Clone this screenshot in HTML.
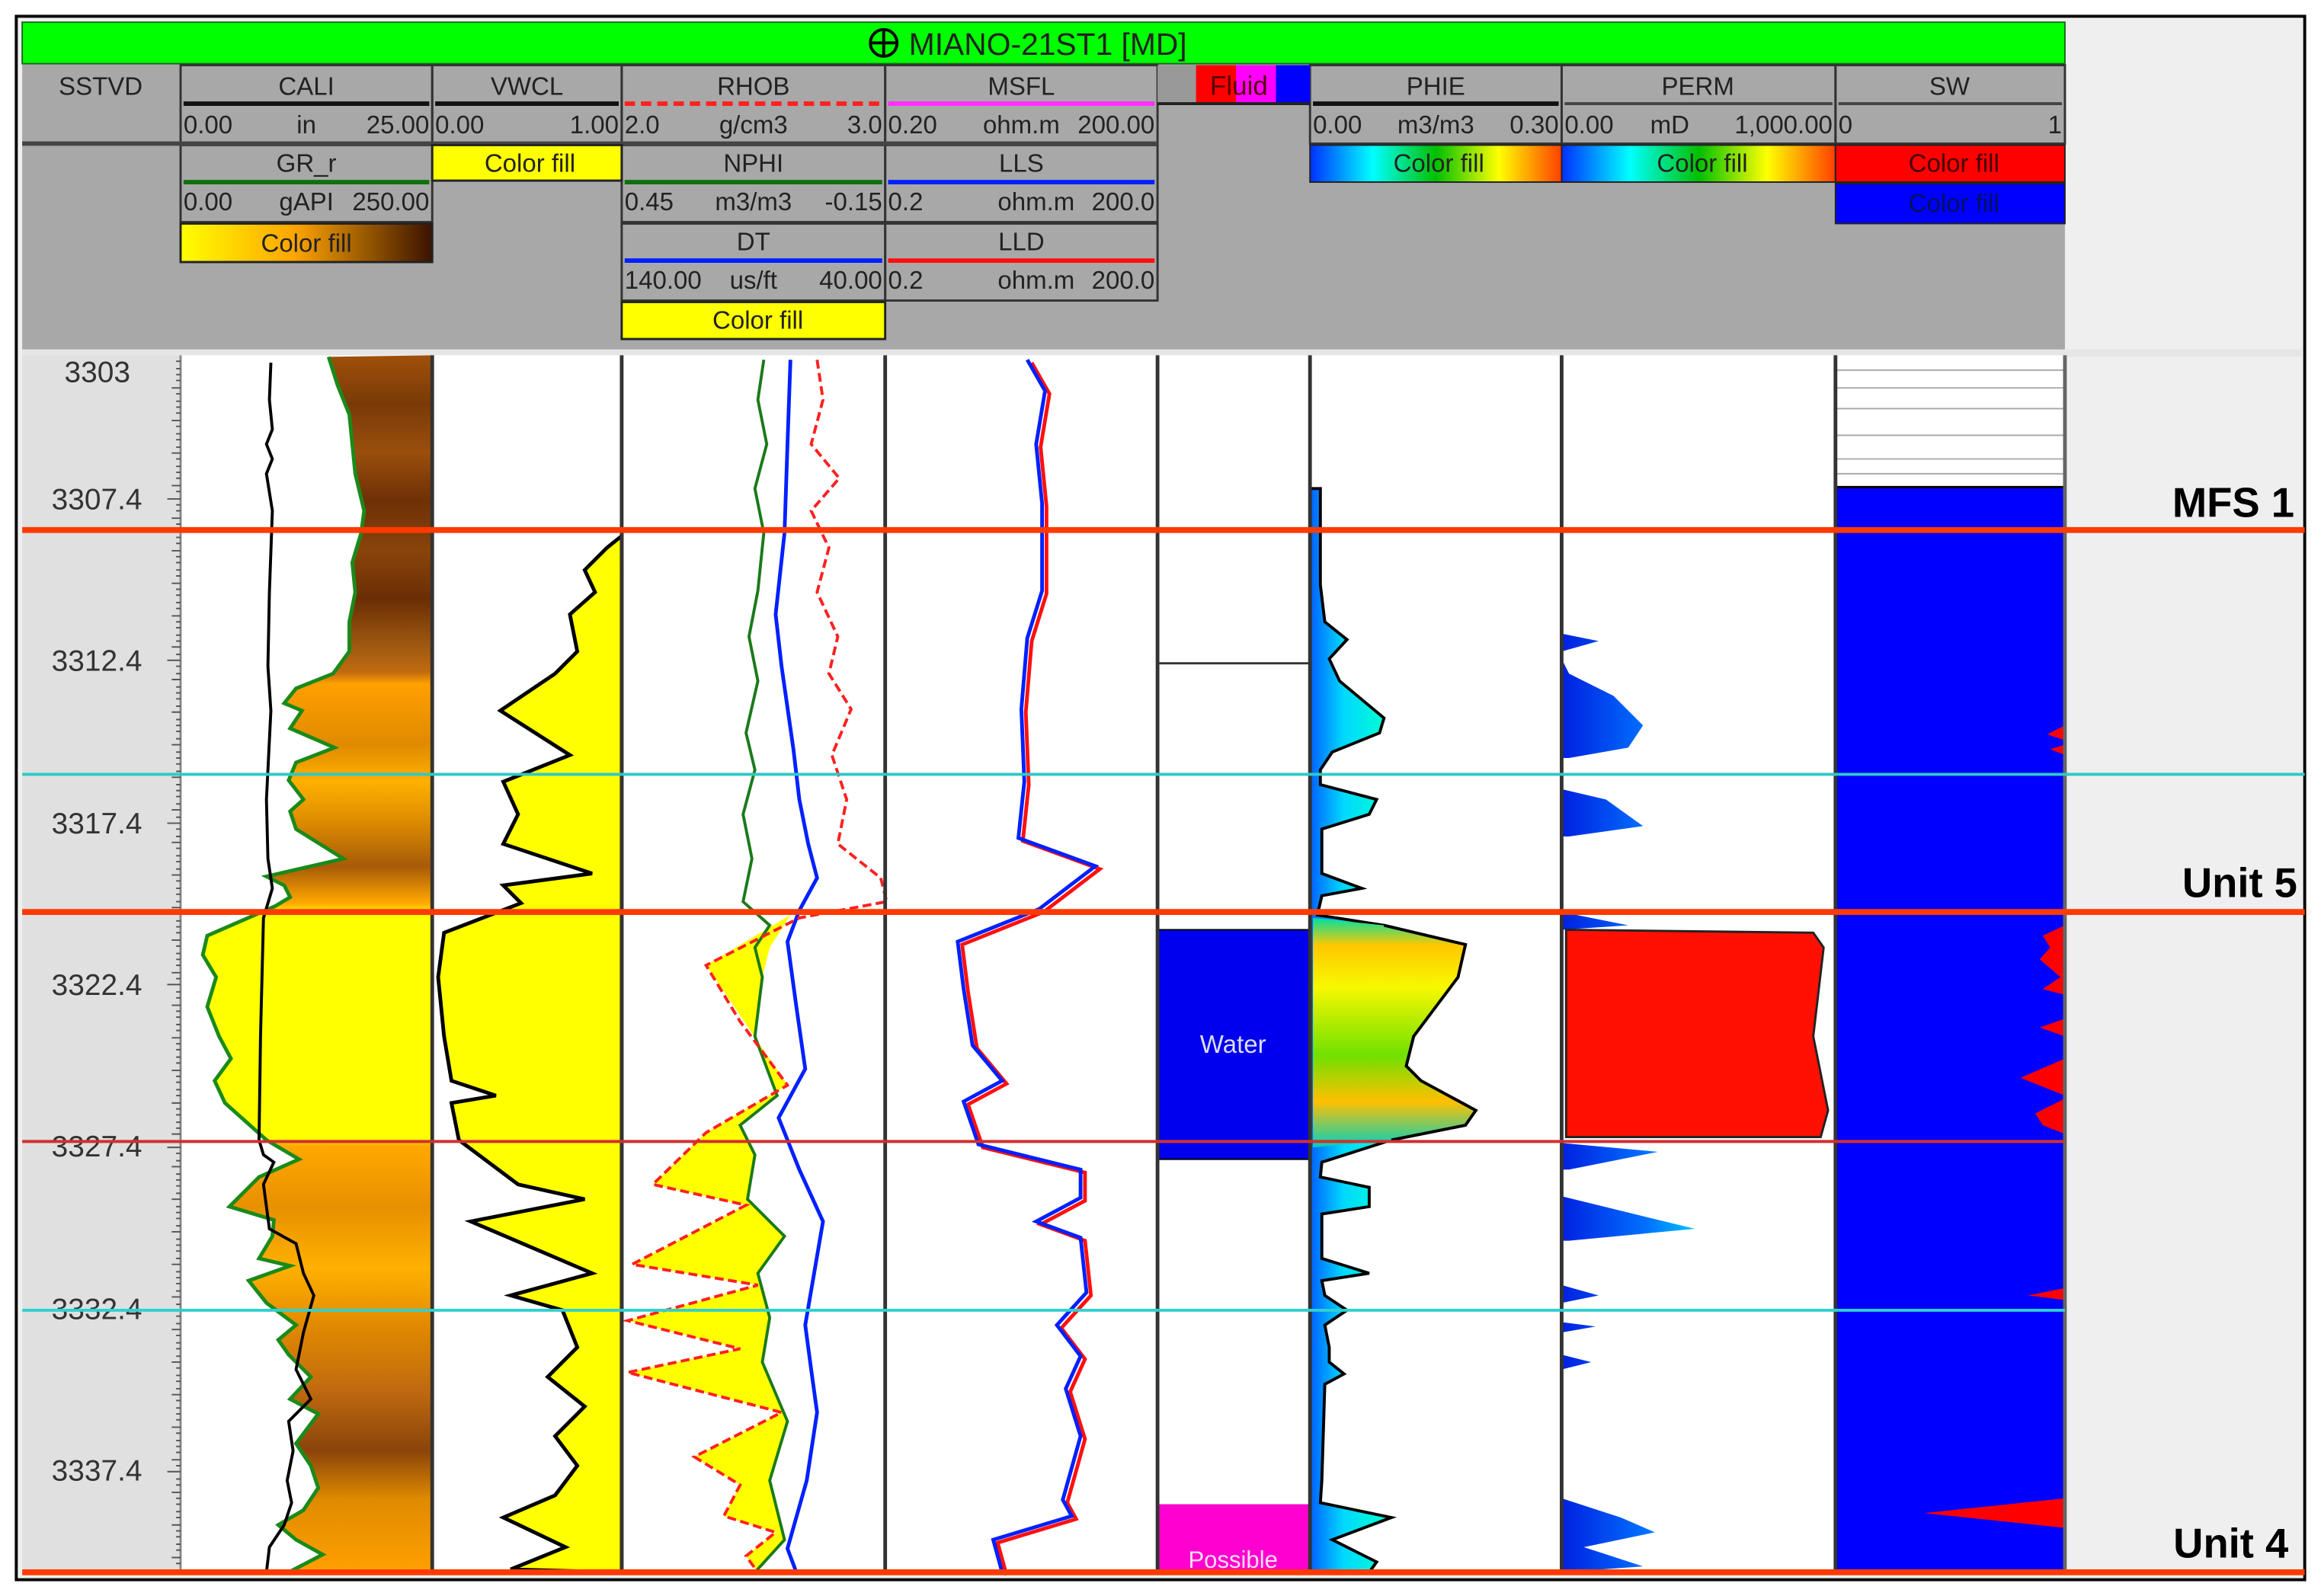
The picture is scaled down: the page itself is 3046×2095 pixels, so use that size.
<!DOCTYPE html>
<html><head><meta charset="utf-8"><style>
html,body{margin:0;padding:0;background:#fff;}
svg{display:block;}
text{font-family:"Liberation Sans",sans-serif;}
</style></head><body>
<svg width="3046" height="2095" viewBox="0 0 1568 1078" preserveAspectRatio="none" xmlns="http://www.w3.org/2000/svg">
<defs>
<linearGradient id="grf" x1="0" x2="1" y1="0" y2="0"><stop offset="0" stop-color="#ffff00"/><stop offset="0.45" stop-color="#ffa500"/><stop offset="1" stop-color="#3a1200"/></linearGradient>
<linearGradient id="rb" x1="0" x2="1" y1="0" y2="0"><stop offset="0" stop-color="#0030ff"/><stop offset="0.25" stop-color="#00ffff"/><stop offset="0.5" stop-color="#00c000"/><stop offset="0.75" stop-color="#ffff00"/><stop offset="1" stop-color="#ff4000"/></linearGradient>
<linearGradient id="grv" x1="0" x2="0" y1="240" y2="1062" gradientUnits="userSpaceOnUse">
<stop offset="0" stop-color="#a0500a"/><stop offset="0.04" stop-color="#7a3a08"/><stop offset="0.08" stop-color="#9a4e0c"/><stop offset="0.12" stop-color="#6e3006"/><stop offset="0.16" stop-color="#8a440a"/><stop offset="0.2" stop-color="#6a2e05"/><stop offset="0.24" stop-color="#a05a10"/><stop offset="0.26" stop-color="#c06a10"/>
<stop offset="0.27" stop-color="#ffa000"/><stop offset="0.32" stop-color="#e08a00"/><stop offset="0.35" stop-color="#ffb000"/><stop offset="0.38" stop-color="#e09000"/><stop offset="0.42" stop-color="#a85a08"/><stop offset="0.45" stop-color="#ffa800"/>
<stop offset="0.46" stop-color="#ffff00"/><stop offset="0.64" stop-color="#ffee00"/><stop offset="0.65" stop-color="#ffa800"/><stop offset="0.7" stop-color="#e89000"/><stop offset="0.75" stop-color="#ffb000"/><stop offset="0.8" stop-color="#e08800"/><stop offset="0.85" stop-color="#c06a10"/><stop offset="0.9" stop-color="#8a440a"/><stop offset="0.94" stop-color="#e08a00"/><stop offset="1" stop-color="#ffa000"/></linearGradient>
<linearGradient id="phv" x1="0" x2="0" y1="620" y2="775" gradientUnits="userSpaceOnUse"><stop offset="0" stop-color="#00e0a0"/><stop offset="0.12" stop-color="#ffc800"/><stop offset="0.3" stop-color="#f8f800"/><stop offset="0.6" stop-color="#70e000"/><stop offset="0.8" stop-color="#ffc000"/><stop offset="1" stop-color="#00d0c0"/></linearGradient>
<linearGradient id="cy" x1="885" x2="960" y1="0" y2="0" gradientUnits="userSpaceOnUse"><stop offset="0" stop-color="#0060ff"/><stop offset="0.3" stop-color="#00d8ff"/><stop offset="0.7" stop-color="#00ffd0"/><stop offset="1" stop-color="#40ff80"/></linearGradient>
<linearGradient id="bl" x1="1055" x2="1150" y1="0" y2="0" gradientUnits="userSpaceOnUse"><stop offset="0" stop-color="#0020e0"/><stop offset="0.6" stop-color="#0070ff"/><stop offset="1" stop-color="#00d0ff"/></linearGradient>
</defs>

<rect x="0" y="0" width="1568" height="1078" fill="#fff"/>
<rect x="11" y="11" width="1546" height="1056" fill="#efefef" stroke="#000" stroke-width="2"/>
<rect x="15" y="15" width="1380" height="222" fill="#a8a8a8"/>
<rect x="15" y="236" width="1540" height="5" fill="#e6e6e6"/>
<rect x="15" y="240" width="1380" height="822" fill="#fff"/>
<rect x="15" y="240" width="107" height="822" fill="#e0e0e0"/>

<rect x="15" y="15" width="1380" height="28" fill="#00ff00" stroke="#1a6a1a" stroke-width="1"/>
<circle cx="597" cy="29" r="9" fill="none" stroke="#000" stroke-width="2"/><line x1="588" y1="29" x2="606" y2="29" stroke="#000" stroke-width="2"/><line x1="597" y1="20" x2="597" y2="38" stroke="#000" stroke-width="2"/>
<text x="614" y="37" font-size="21" fill="#222">MIANO-21ST1 [MD]</text>

<g stroke="#333" stroke-width="1.5" fill="none">
<rect x="122" y="44" width="170" height="53"/><rect x="122" y="98" width="170" height="52"/>
<rect x="292" y="44" width="128" height="53"/>
<rect x="420" y="44" width="178" height="53"/><rect x="420" y="98" width="178" height="52"/><rect x="420" y="151" width="178" height="52"/>
<rect x="598" y="44" width="184" height="53"/><rect x="598" y="98" width="184" height="52"/><rect x="598" y="151" width="184" height="52"/>
<rect x="885" y="44" width="170" height="53"/><rect x="1055" y="44" width="185" height="53"/><rect x="1240" y="44" width="155" height="53"/>
</g>
<line x1="15" y1="97" x2="782" y2="97" stroke="#444" stroke-width="3"/>
<rect x="122" y="151" width="170" height="26" fill="url(#grf)" stroke="#222" stroke-width="1.5"/>
<rect x="292" y="98" width="128" height="24" fill="#ffff00" stroke="#222" stroke-width="1.5"/>
<rect x="420" y="204" width="178" height="25" fill="#ffff00" stroke="#222" stroke-width="1.5"/>
<rect x="885" y="98" width="170" height="25" fill="url(#rb)" stroke="#222" stroke-width="1"/>
<rect x="1055" y="98" width="185" height="25" fill="url(#rb)" stroke="#222" stroke-width="1"/>
<rect x="1240" y="98" width="155" height="25" fill="#ff0000" stroke="#222" stroke-width="1"/>
<rect x="1240" y="124" width="155" height="27" fill="#0000ff" stroke="#222" stroke-width="1"/>
<rect x="782" y="44" width="103" height="26" fill="#999"/>
<rect x="808" y="44" width="27" height="26" fill="#ff0000"/><rect x="835" y="44" width="27" height="26" fill="#ff00ff"/><rect x="862" y="44" width="23" height="26" fill="#0000ff"/>
<line x1="782" y1="70" x2="885" y2="70" stroke="#222" stroke-width="2"/>

<g stroke-width="3">
<line x1="124" y1="70" x2="290" y2="70" stroke="#111"/>
<line x1="294" y1="70" x2="418" y2="70" stroke="#111"/>
<line x1="422" y1="70" x2="596" y2="70" stroke="#ff2020" stroke-dasharray="7,4"/>
<line x1="600" y1="70" x2="780" y2="70" stroke="#ff30ff"/>
<line x1="124" y1="123" x2="290" y2="123" stroke="#107010"/>
<line x1="422" y1="123" x2="596" y2="123" stroke="#107010"/>
<line x1="600" y1="123" x2="780" y2="123" stroke="#0020ff"/>
<line x1="422" y1="176" x2="596" y2="176" stroke="#0020ff"/>
<line x1="600" y1="176" x2="780" y2="176" stroke="#ff1010"/>
<line x1="887" y1="70" x2="1053" y2="70" stroke="#111"/>
<line x1="1057" y1="70" x2="1238" y2="70" stroke="#444" stroke-width="2"/>
<line x1="1242" y1="70" x2="1393" y2="70" stroke="#444" stroke-width="2"/>
</g>

<g font-size="17" fill="#222">
<text x="68" y="64" text-anchor="middle">SSTVD</text>
<text x="207" y="64" text-anchor="middle">CALI</text>
<text x="356" y="64" text-anchor="middle">VWCL</text>
<text x="509" y="64" text-anchor="middle">RHOB</text>
<text x="690" y="64" text-anchor="middle">MSFL</text>
<text x="837" y="64" text-anchor="middle" fill="#500" font-size="18">Fluid</text>
<text x="970" y="64" text-anchor="middle">PHIE</text>
<text x="1147" y="64" text-anchor="middle">PERM</text>
<text x="1317" y="64" text-anchor="middle">SW</text>
<text x="207" y="116" text-anchor="middle">GR_r</text>
<text x="509" y="116" text-anchor="middle">NPHI</text>
<text x="690" y="116" text-anchor="middle">LLS</text>
<text x="509" y="169" text-anchor="middle">DT</text>
<text x="690" y="169" text-anchor="middle">LLD</text>
<text x="124" y="90">0.00</text><text x="207" y="90" text-anchor="middle">in</text><text x="290" y="90" text-anchor="end">25.00</text>
<text x="294" y="90">0.00</text><text x="418" y="90" text-anchor="end">1.00</text>
<text x="422" y="90">2.0</text><text x="509" y="90" text-anchor="middle">g/cm3</text><text x="596" y="90" text-anchor="end">3.0</text>
<text x="600" y="90">0.20</text><text x="690" y="90" text-anchor="middle">ohm.m</text><text x="780" y="90" text-anchor="end">200.00</text>
<text x="887" y="90">0.00</text><text x="970" y="90" text-anchor="middle">m3/m3</text><text x="1053" y="90" text-anchor="end">0.30</text>
<text x="1057" y="90">0.00</text><text x="1128" y="90" text-anchor="middle">mD</text><text x="1238" y="90" text-anchor="end">1,000.00</text>
<text x="1242" y="90">0</text><text x="1393" y="90" text-anchor="end">1</text>
<text x="124" y="142">0.00</text><text x="207" y="142" text-anchor="middle">gAPI</text><text x="290" y="142" text-anchor="end">250.00</text>
<text x="422" y="142">0.45</text><text x="509" y="142" text-anchor="middle">m3/m3</text><text x="596" y="142" text-anchor="end">-0.15</text>
<text x="600" y="142">0.2</text><text x="700" y="142" text-anchor="middle">ohm.m</text><text x="780" y="142" text-anchor="end">200.0</text>
<text x="422" y="195">140.00</text><text x="509" y="195" text-anchor="middle">us/ft</text><text x="596" y="195" text-anchor="end">40.00</text>
<text x="600" y="195">0.2</text><text x="700" y="195" text-anchor="middle">ohm.m</text><text x="780" y="195" text-anchor="end">200.0</text>
<text x="207" y="170" text-anchor="middle">Color fill</text>
<text x="358" y="116" text-anchor="middle">Color fill</text>
<text x="512" y="222" text-anchor="middle">Color fill</text>
<text x="972" y="116" text-anchor="middle">Color fill</text>
<text x="1150" y="116" text-anchor="middle">Color fill</text>
<text x="1320" y="116" text-anchor="middle" fill="#400">Color fill</text>
<text x="1320" y="143" text-anchor="middle" fill="#001060">Color fill</text>
</g>

<polygon fill="url(#grv)" points="292,240 222,241 228,260 236,280 238,300 240,320 246,345 244,360 238,380 240,400 236,420 236,440 225,455 200,465 192,475 204,480 196,492 226,505 200,515 195,527 205,540 196,548 200,560 232,580 180,592 192,598 196,606 186,612 140,632 137,645 146,660 140,680 148,700 156,715 145,730 152,745 180,770 202,783 175,795 155,815 185,824 184,835 175,850 196,855 168,865 180,880 200,895 188,905 195,915 210,930 196,945 215,955 200,975 210,990 215,1005 205,1020 188,1030 200,1040 218,1050 195,1062 292,1062"/>
<polygon fill="#ffff00" points="292,616 186,616 140,632 137,645 146,660 140,680 148,700 156,715 145,730 152,745 180,770 292,770"/>
<polyline fill="none" stroke="#1a8a1a" stroke-width="2.5" points="222,241 228,260 236,280 238,300 240,320 246,345 244,360 238,380 240,400 236,420 236,440 225,455 200,465 192,475 204,480 196,492 226,505 200,515 195,527 205,540 196,548 200,560 232,580 180,592 192,598 196,606 186,612 140,632 137,645 146,660 140,680 148,700 156,715 145,730 152,745 180,770 202,783 175,795 155,815 185,824 184,835 175,850 196,855 168,865 180,880 200,895 188,905 195,915 210,930 196,945 215,955 200,975 210,990 215,1005 205,1020 188,1030 200,1040 218,1050 195,1062"/>
<polyline fill="none" stroke="#000" stroke-width="2" points="183,245 182,270 184,290 180,300 184,310 180,320 184,345 182,400 181,450 183,480 180,540 181,580 184,600 178,620 176,700 175,770 178,780 185,785 178,800 182,830 200,840 205,860 212,875 205,900 200,925 210,945 195,960 198,980 194,1000 197,1015 192,1030 182,1045 180,1062"/>

<polygon fill="#ffff00" stroke="#000" stroke-width="2.5" points="420,362 410,370 395,385 402,400 385,415 390,440 375,455 338,480 385,510 340,528 350,550 340,570 400,590 340,598 352,610 300,630 296,660 300,700 305,730 335,740 305,745 310,770 350,800 395,810 318,825 400,860 345,875 380,885 390,910 370,930 395,950 375,970 390,990 375,1010 340,1025 382,1045 345,1060 420,1062"/>

<polygon fill="#ffff00" points="534,618 477,652 532,733 477,765 441,800 504,814 427,854 512,868 424,892 500,911 424,927 528,954 469,984 500,1003 489,1024 524,1035 504,1051 512,1062 510,1062 530,1040 520,1000 532,960 515,920 520,890 512,860 530,835 505,810 510,780 500,760 525,740 510,700 515,660 520,640"/>
<polyline fill="none" stroke="#1a7a1a" stroke-width="2" points="516,243 512,270 518,300 510,330 516,360 512,399 506,430 512,460 504,495 510,520 502,550 508,580 502,609 520,625 510,640 515,660 510,700 525,740 500,760 510,780 505,810 530,835 512,860 520,890 515,920 532,960 520,1000 530,1040 510,1062"/>
<polyline fill="none" stroke="#0020ff" stroke-width="2.5" points="534,243 532,300 530,360 524,415 528,450 536,506 540,540 546,570 552,593 540,615 532,636 538,680 544,722 526,755 540,790 556,825 550,860 544,895 548,925 552,954 545,1000 532,1046 538,1062"/>
<polyline fill="none" stroke="#ff2020" stroke-width="2" stroke-dasharray="6,3" points="552,243 556,270 548,300 567,323 548,345 560,370 552,400 566,430 560,455 575,479 562,510 572,540 566,570 595,593 599,609 540,620 477,652 500,690 532,733 477,765 441,800 504,814 427,854 512,868 424,892 500,911 424,927 528,954 469,984 500,1003 489,1024 524,1035 504,1051 512,1062"/>

<polyline fill="none" stroke="#ff1010" stroke-width="2.5" transform="translate(3,2)" points="694,243 706,264 700,300 704,340 704,399 694,431 690,479 692,528 688,566 740,585 702,614 647,636 651,668 657,706 677,730 651,744 661,773 730,790 730,809 700,825 730,836 734,873 714,895 730,916 720,938 730,970 718,1013 724,1024 671,1040 677,1062"/>
<polyline fill="none" stroke="#0020ff" stroke-width="2.5" points="694,243 706,264 700,300 704,340 704,399 694,431 690,479 692,528 688,566 740,585 702,614 647,636 651,668 657,706 677,730 651,744 661,773 730,790 730,809 700,825 730,836 734,873 714,895 730,916 720,938 730,970 718,1013 724,1024 671,1040 677,1062"/>

<line x1="782" y1="448" x2="885" y2="448" stroke="#333" stroke-width="1.5"/>
<rect x="782" y="628" width="103" height="155" fill="#0000ee" stroke="#000" stroke-width="1"/>
<text x="833" y="711" font-size="17" fill="#dde" text-anchor="middle">Water</text>
<rect x="782" y="1016" width="103" height="46" fill="#ff00d0"/>
<text x="833" y="1059" font-size="16" fill="#fde" text-anchor="middle">Possible</text>

<polygon fill="url(#cy)" stroke="#000" stroke-width="2" points="885,330 892,330 892,395 895,420 910,432 898,445 905,460 935,485 932,495 900,508 892,520 892,530 930,540 925,550 893,560 893,590 920,600 893,605 890,618 935,625 990,638 985,660 970,680 955,700 950,720 960,730 997,750 990,760 940,770 893,785 892,795 925,802 925,815 893,820 893,850 925,860 893,865 895,875 910,885 895,895 898,910 898,920 908,928 895,935 893,1000 892,1015 940,1025 900,1040 930,1055 925,1062 885,1062"/>
<polygon fill="url(#phv)" points="887,620 935,625 990,638 985,660 970,680 955,700 950,720 960,730 997,750 990,760 940,770 887,775"/>
<polyline fill="none" stroke="#000" stroke-width="2" points="935,625 990,638 985,660 970,680 955,700 950,720 960,730 997,750 990,760 940,770"/>

<g fill="url(#bl)">
<polygon points="1055,428 1080,433 1055,440"/>
<polygon points="1055,445 1060,455 1090,470 1110,490 1100,505 1060,512 1055,512"/>
<polygon points="1055,533 1085,540 1110,558 1060,565 1055,565"/>
<polygon points="1055,616 1100,625 1055,628"/>
<polygon points="1055,772 1120,778 1060,790 1055,790"/>
<polygon points="1055,808 1145,830 1060,838 1055,838"/>
<polygon points="1055,868 1080,875 1055,880"/>
<polygon points="1055,893 1078,896 1055,900"/>
<polygon points="1055,915 1075,920 1055,925"/>
<polygon points="1055,1012 1095,1025 1118,1035 1070,1045 1110,1058 1055,1062"/>
</g>
<polygon fill="#ff1000" stroke="#222" stroke-width="1.5" points="1058,628 1225,630 1232,640 1225,700 1235,750 1230,768 1058,768"/>

<g stroke="#aaa" stroke-width="1"><line x1="1240" y1="250" x2="1395" y2="250"/><line x1="1240" y1="262" x2="1395" y2="262"/><line x1="1240" y1="276" x2="1395" y2="276"/><line x1="1240" y1="294" x2="1395" y2="294"/><line x1="1240" y1="310" x2="1395" y2="310"/><line x1="1240" y1="320" x2="1395" y2="320"/></g>
<rect x="1240" y="329" width="155" height="733" fill="#0000ff"/>
<line x1="1240" y1="329" x2="1395" y2="329" stroke="#000" stroke-width="1.5"/>
<g fill="#ff0000">
<polygon points="1395,490 1383,496 1395,500"/><polygon points="1395,503 1385,506 1395,510"/>
<polygon points="1395,625 1380,632 1385,640 1378,648 1392,660 1380,668 1395,672"/>
<polygon points="1395,688 1378,694 1395,700"/>
<polygon points="1395,715 1365,728 1395,740"/>
<polygon points="1395,742 1375,752 1380,760 1395,766"/>
<polygon points="1395,870 1370,875 1395,878"/>
<polygon points="1395,1012 1300,1022 1395,1032"/>
</g>

<g stroke="#333" stroke-width="2.5">
<line x1="122" y1="240" x2="122" y2="1062" stroke="#888" stroke-width="1.5"/>
<line x1="292" y1="240" x2="292" y2="1062"/><line x1="420" y1="240" x2="420" y2="1062"/><line x1="598" y1="240" x2="598" y2="1062"/><line x1="782" y1="240" x2="782" y2="1062"/><line x1="885" y1="240" x2="885" y2="1062"/><line x1="1055" y1="240" x2="1055" y2="1062"/><line x1="1240" y1="240" x2="1240" y2="1062"/><line x1="1395" y1="240" x2="1395" y2="1062" stroke="#666"/>
</g>

<path stroke="#555" stroke-width="1" d="M119 244H122M119 249H122M119 253H122M119 257H122M116 262H122M119 266H122M119 271H122M119 275H122M119 279H122M116 284H122M119 288H122M119 293H122M119 297H122M119 302H122M116 306H122M119 310H122M119 315H122M119 319H122M119 323H122M116 328H122M119 332H122M113 337H122M119 341H122M119 345H122M116 350H122M119 354H122M119 358H122M119 363H122M119 367H122M116 372H122M119 376H122M119 380H122M119 385H122M119 389H122M116 394H122M119 398H122M119 402H122M119 407H122M119 411H122M116 416H122M119 420H122M119 424H122M119 429H122M119 433H122M116 437H122M119 442H122M113 446H122M119 450H122M119 455H122M116 459H122M119 464H122M119 468H122M119 472H122M119 477H122M116 481H122M119 486H122M119 490H122M119 494H122M119 499H122M116 503H122M119 508H122M119 512H122M119 516H122M119 521H122M116 525H122M119 530H122M119 534H122M119 538H122M119 543H122M116 547H122M119 552H122M113 556H122M119 560H122M119 565H122M116 569H122M119 573H122M119 578H122M119 582H122M119 587H122M116 591H122M119 595H122M119 600H122M119 604H122M119 609H122M116 613H122M119 617H122M119 622H122M119 626H122M119 630H122M116 635H122M119 639H122M119 644H122M119 648H122M119 652H122M116 657H122M119 661H122M113 665H122M119 670H122M119 674H122M116 679H122M119 683H122M119 687H122M119 692H122M119 696H122M116 701H122M119 705H122M119 709H122M119 714H122M119 718H122M116 723H122M119 727H122M119 731H122M119 736H122M119 740H122M116 745H122M119 749H122M119 753H122M119 758H122M119 762H122M116 766H122M119 771H122M113 775H122M119 779H122M119 784H122M116 788H122M119 793H122M119 797H122M119 801H122M119 806H122M116 810H122M119 815H122M119 819H122M119 823H122M119 828H122M116 832H122M119 837H122M119 841H122M119 845H122M119 850H122M116 854H122M119 859H122M119 863H122M119 867H122M119 872H122M116 876H122M119 881H122M113 885H122M119 889H122M119 894H122M116 898H122M119 902H122M119 907H122M119 911H122M119 916H122M116 920H122M119 924H122M119 929H122M119 933H122M119 938H122M116 942H122M119 946H122M119 951H122M119 955H122M119 959H122M116 964H122M119 968H122M119 973H122M119 977H122M119 981H122M116 986H122M119 990H122M113 994H122M119 999H122M119 1003H122M116 1008H122M119 1012H122M119 1016H122M119 1021H122M119 1025H122M116 1030H122M119 1034H122M119 1038H122M119 1043H122M119 1047H122M116 1052H122M119 1056H122"/>
<g font-size="20" fill="#333" text-anchor="end">
<text x="88" y="258">3303</text><text x="96" y="344">3307.4</text><text x="96" y="453">3312.4</text><text x="96" y="563">3317.4</text><text x="96" y="672">3322.4</text><text x="96" y="781">3327.4</text><text x="96" y="891">3332.4</text><text x="96" y="1000">3337.4</text>
</g>

<line x1="15" y1="358" x2="1557" y2="358" stroke="#ff3a00" stroke-width="4"/>
<line x1="15" y1="523" x2="1557" y2="523" stroke="#30c8c8" stroke-width="2"/>
<line x1="15" y1="616" x2="1557" y2="616" stroke="#ff3a00" stroke-width="4"/>
<line x1="15" y1="771" x2="1395" y2="771" stroke="#d03030" stroke-width="2"/>
<line x1="15" y1="885" x2="1395" y2="885" stroke="#30d0d0" stroke-width="2"/>
<line x1="15" y1="1062" x2="1557" y2="1062" stroke="#ff3a00" stroke-width="4"/>

<g font-size="28" font-weight="bold" fill="#000" text-anchor="end">
<text x="1550" y="349">MFS 1</text><text x="1552" y="606">Unit 5</text><text x="1546" y="1052">Unit 4</text>
</g>
</svg>
</body></html>
